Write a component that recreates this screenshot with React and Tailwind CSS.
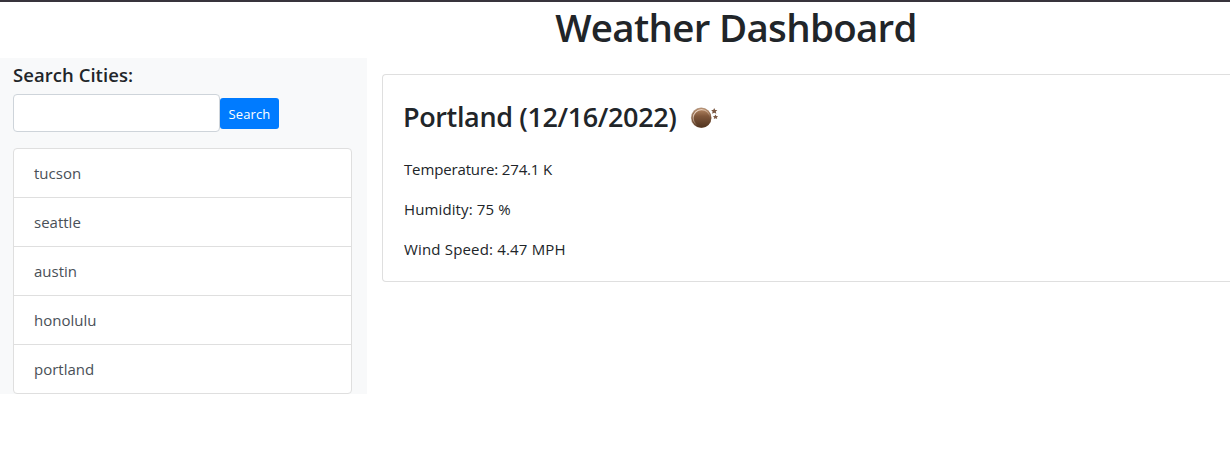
const cities = ["tucson", "seattle", "austin", "honolulu", "portland"];

function NewMoonIcon() {
  return (
    <svg width="50" height="50" viewBox="0 0 50 50" className="shrink-0" aria-hidden="true">
      <defs>
        <linearGradient id="moon" x1="0" y1="0" x2="0" y2="1">
          <stop offset="0" stopColor="#b98b66" />
          <stop offset="0.4" stopColor="#80573b" />
          <stop offset="1" stopColor="#50331f" />
        </linearGradient>
        <linearGradient id="rim" x1="0.2" y1="0" x2="0.8" y2="1">
          <stop offset="0" stopColor="#f6e4d6" />
          <stop offset="0.5" stopColor="#d0b49c" stopOpacity="0.5" />
          <stop offset="0.8" stopColor="#5a3c28" stopOpacity="0" />
        </linearGradient>
      </defs>
      <circle cx="21.2" cy="24.8" r="10.3" fill="#b39a86" />
      <circle cx="21.5" cy="25" r="9.8" fill="url(#moon)" />
      <circle cx="21.6" cy="25.1" r="8.5" fill="none" stroke="url(#rim)" strokeWidth="1.2" />
      <path d="M34.2 15l1 1.9 2.1.2-1.5 1.5.5 2.1-2.1-1-2.1 1 .5-2.1-1.5-1.5 2.1-.2z" fill="#7c5944" />
      <path d="M35.5 21.5l.8 1.5 1.8.2-1.3 1.2.4 1.7-1.7-.8-1.7.8.4-1.7-1.3-1.2 1.8-.2z" fill="#7c5944" />
    </svg>
  );
}

function Sidebar() {
  return (
    <aside className="h-[336px] w-[367px] shrink-0 bg-[#f8f9fa] pl-[13px] pr-[15px] pt-[5px]">
      <h5 className="mb-[7px] h-6 text-[18.5px] font-semibold leading-6 tracking-[0.05px]">Search Cities:</h5>
      <div className="flex items-center">
        <input
          aria-label="City"
          className="h-[38px] w-[207px] rounded border border-[#ced4da] bg-white px-3 outline-none"
        />
        <button className="h-[31px] w-[59px] rounded-[3px] bg-[#007bff] pt-px text-[13px] leading-5 tracking-[0.1px] text-white">
          Search
        </button>
      </div>
      <ul className="mt-4 divide-y divide-[#dfdfdf] overflow-hidden rounded border border-[#dfdfdf] bg-white">
        {cities.map((city) => (
          <li key={city} className="h-[49px] px-5 pt-3 text-[15px] leading-6 text-[#495057] last:h-12">
            {city}
          </li>
        ))}
      </ul>
    </aside>
  );
}

function CurrentWeather() {
  return (
    <section className="ml-[15px] mt-4 h-[208px] flex-1 rounded-l border border-r-0 border-[#dfdfdf] pl-[21px] pt-[18px]">
      <div className="flex h-[50px] items-center">
        <h3 className="-ml-px w-[277px] whitespace-nowrap pb-[3px] text-[27px] font-semibold leading-[34px] tracking-[-0.37px]">
          Portland (12/16/2022)
        </h3>
        <NewMoonIcon />
      </div>
      <div className="mt-[14px] flex flex-col gap-4 text-[15px] leading-6">
        <p className="tracking-[-0.14px]">Temperature: 274.1 K</p>
        <p className="tracking-[0.12px]">Humidity: 75 %</p>
        <p className="tracking-[0.17px]">Wind Speed: 4.47 MPH</p>
      </div>
    </section>
  );
}

export default function App() {
  return (
    <div className="h-[476px] w-full overflow-hidden border-t-2 border-[#38343c] bg-white font-['Open_Sans','Noto_Sans',sans-serif] text-[#212529]">
      <header className="h-14 pl-[242px] text-center">
        <h1 className="text-[38.5px] font-semibold leading-[50px] tracking-[-0.7px]">Weather Dashboard</h1>
      </header>
      <main className="flex items-start">
        <Sidebar />
        <CurrentWeather />
      </main>
    </div>
  );
}
